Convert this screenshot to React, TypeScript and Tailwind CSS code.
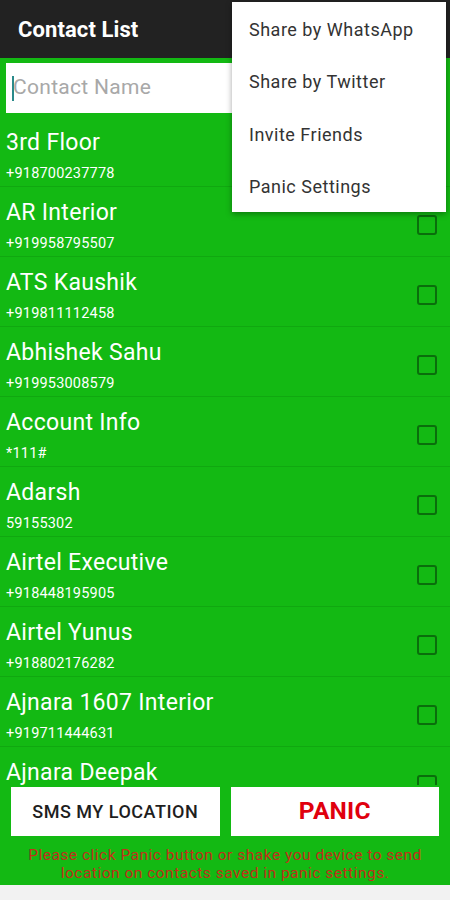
import React from "react";

const contacts = [
  ["3rd Floor", "+918700237778"],
  ["AR Interior", "+919958795507"],
  ["ATS Kaushik", "+919811112458"],
  ["Abhishek Sahu", "+919953008579"],
  ["Account Info", "*111#"],
  ["Adarsh", "59155302"],
  ["Airtel Executive", "+918448195905"],
  ["Airtel Yunus", "+918802176282"],
  ["Ajnara 1607 Interior", "+919711444631"],
  ["Ajnara Deepak", "+919811000000"],
];

export default function App() {
  return (
    <div
      className="relative w-[450px] h-[900px] overflow-hidden bg-[#13b913] flex flex-col"
      style={{ fontFamily: "Roboto, 'Noto Sans', sans-serif" }}
    >
      <div className="h-[58px] shrink-0 bg-[#222222] flex items-center pl-[18px]">
        <span className="text-white text-[22px] font-bold tracking-[0.1px]">Contact List</span>
      </div>
      <div className="px-[6px] pt-[5px] pb-[4px] shrink-0">
        <div className="h-[50px] bg-white flex items-center pl-[7px] relative">
          <div className="absolute left-[6px] top-[13px] w-[2px] h-[25px] bg-[#2a8a8a]" />
          <span className="text-[21px] text-[#a8a8a8] tracking-[0.3px]">Contact Name</span>
        </div>
      </div>
      <div className="flex-1 overflow-hidden flex flex-col min-h-0">
        {contacts.map(([name, num], i) => (
          <div
            key={i}
            className="h-[70px] shrink-0 flex items-center border-b border-[#10a810] pr-[13px]"
          >
            <div className="flex-1 pl-[6px] flex flex-col mt-[8px]">
              <span className="text-white text-[23px] leading-[28px] tracking-[0.3px]">{name}</span>
              <span className="text-white text-[14.5px] leading-[18px] mt-[8px] tracking-[0.2px]">{num}</span>
            </div>
            <div className="w-[20px] h-[20px] border-2 border-[#0a6e0c] rounded-[3px] mt-[6px]" />
          </div>
        ))}
      </div>
      <div className="shrink-0 bg-[#13b913] h-[100px] flex flex-col relative">
        <div className="flex gap-[11px] px-[11px] pt-[2px]">
          <button className="flex-1 h-[49px] bg-white flex items-center justify-center text-[#1e1e1e] text-[18px] font-medium tracking-[0.5px]">
            SMS MY LOCATION
          </button>
          <button className="flex-1 h-[49px] bg-white flex items-center justify-center text-[#e0000e] text-[24.5px] font-bold tracking-[0.2px]">
            PANIC
          </button>
        </div>
        <div className="text-center text-[#c0301a] text-[15.5px] leading-[18px] mt-[10px] px-[18px] tracking-[0.5px]">
          Please click Panic button or shake you device to send location on contacts saved in panic settings.
        </div>
      </div>
      <div className="h-[15px] shrink-0 bg-[#f2f2f2]" />

      <div className="absolute left-[232px] top-[2px] w-[214px] h-[210px] bg-white shadow-[0_2px_6px_rgba(0,0,0,0.35)] flex flex-col pt-[1px]">
        {["Share by WhatsApp", "Share by Twitter", "Invite Friends", "Panic Settings"].map((t) => (
          <div key={t} className="h-[52.5px] shrink-0 flex items-center pl-[17px] text-[18px] tracking-[0.5px] text-[#333333]">
            {t}
          </div>
        ))}
      </div>
    </div>
  );
}
